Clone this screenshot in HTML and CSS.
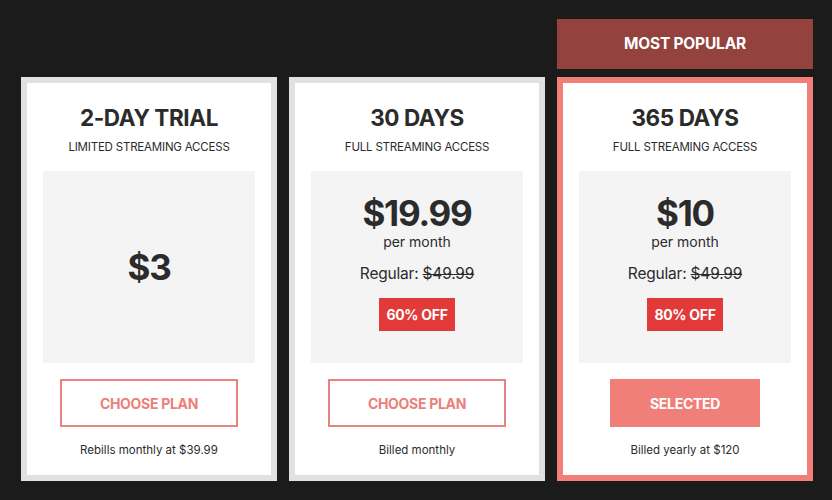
FILE: index.html
```html
<!DOCTYPE html>
<html lang="en">
<head>
<meta charset="utf-8">
<title>Plans</title>
<link rel="stylesheet" href="styles.css">
</head>
<body>
<div class="plans">
  <div class="plan">
    <div class="card">
      <h2 class="title">2-DAY TRIAL</h2>
      <p class="subtitle">LIMITED STREAMING ACCESS</p>
      <div class="pricebox">
        <div class="price">$3</div>
      </div>
      <button class="btn">CHOOSE PLAN</button>
      <p class="note">Rebills monthly at $39.99</p>
    </div>
  </div>
  <div class="plan">
    <div class="card">
      <h2 class="title">30 DAYS</h2>
      <p class="subtitle">FULL STREAMING ACCESS</p>
      <div class="pricebox pricebox-top">
        <div class="price">$19.99</div>
        <div class="per">per month</div>
        <div class="regular">Regular: <s>$49.99</s></div>
        <div class="badge">60% OFF</div>
      </div>
      <button class="btn">CHOOSE PLAN</button>
      <p class="note">Billed monthly</p>
    </div>
  </div>
  <div class="plan">
    <div class="ribbon">MOST POPULAR</div>
    <div class="card card-selected">
      <h2 class="title">365 DAYS</h2>
      <p class="subtitle">FULL STREAMING ACCESS</p>
      <div class="pricebox pricebox-top">
        <div class="price">$10</div>
        <div class="per">per month</div>
        <div class="regular">Regular: <s>$49.99</s></div>
        <div class="badge">80% OFF</div>
      </div>
      <button class="btn btn-selected">SELECTED</button>
      <p class="note">Billed yearly at $120</p>
    </div>
  </div>
</div>
</body>
</html>
```
FILE: styles.css
```css
* { box-sizing: border-box; }
html, body {
  margin: 0;
  padding: 0;
  background: #1b1b1b;
  font-family: Inter, "Noto Sans", "Liberation Sans", sans-serif;
  color: #2b2b2b;
}
.plans {
  display: flex;
  align-items: flex-end;
  gap: 12px;
  padding: 19px 0 0 21px;
}
.plan {
  width: 256px;
  display: flex;
  flex-direction: column;
  gap: 8px;
}
.ribbon {
  height: 50px;
  padding-bottom: 2px;
  background: #93423d;
  color: #fff;
  font-weight: 700;
  font-size: 15.5px;
  display: flex;
  align-items: center;
  justify-content: center;
  letter-spacing: -0.2px;
}
.card {
  height: 404px;
  background: #fff;
  border: 6px solid #e1e1e1;
  padding: 21px 16px 0;
  display: flex;
  flex-direction: column;
  align-items: center;
}
.card-selected { border-color: #f07f79; }
.title {
  margin: 0;
  font-size: 22.5px;
  line-height: 28px;
  font-weight: 700;
  letter-spacing: -0.4px;
  color: #2b2b2b;
}
.subtitle {
  margin: 7px 0 0;
  font-size: 11.5px;
  line-height: 16px;
  letter-spacing: -0.2px;
  color: #2b2b2b;
}
.pricebox {
  margin-top: 16px;
  align-self: stretch;
  height: 192px;
  background: #f4f4f4;
  display: flex;
  flex-direction: column;
  align-items: center;
  justify-content: center;
}
.pricebox-top {
  justify-content: flex-start;
  padding-top: 24px;
}
.price {
  font-size: 35px;
  line-height: 36px;
  font-weight: 700;
  letter-spacing: -1.2px;
  color: #2b2b2b;
}
.per {
  margin-top: 2px;
  font-size: 14px;
  line-height: 18px;
  color: #2b2b2b;
}
.regular {
  margin-top: 13px;
  font-size: 15.5px;
  line-height: 20px;
  color: #2b2b2b;
  letter-spacing: -0.2px;
}
.regular s { text-decoration-thickness: 1px; }
.badge {
  margin-top: 14px;
  height: 33px;
  padding: 0 7px;
  background: #e13a38;
  color: #fff;
  font-weight: 700;
  font-size: 14px;
  display: flex;
  align-items: center;
  letter-spacing: -0.3px;
}
.btn {
  margin-top: 16px;
  height: 48px;
  padding: 0 38px;
  border: 2px solid #e8847f;
  background: #fff;
  color: #ec7f79;
  font-family: inherit;
  font-weight: 700;
  font-size: 14px;
  letter-spacing: -0.3px;
}
.btn-selected {
  background: #f07f79;
  border-color: #f07f79;
  color: #fff;
}
.note {
  margin: 15px 0 0;
  font-size: 11.5px;
  line-height: 16px;
  color: #2b2b2b;
}
```
